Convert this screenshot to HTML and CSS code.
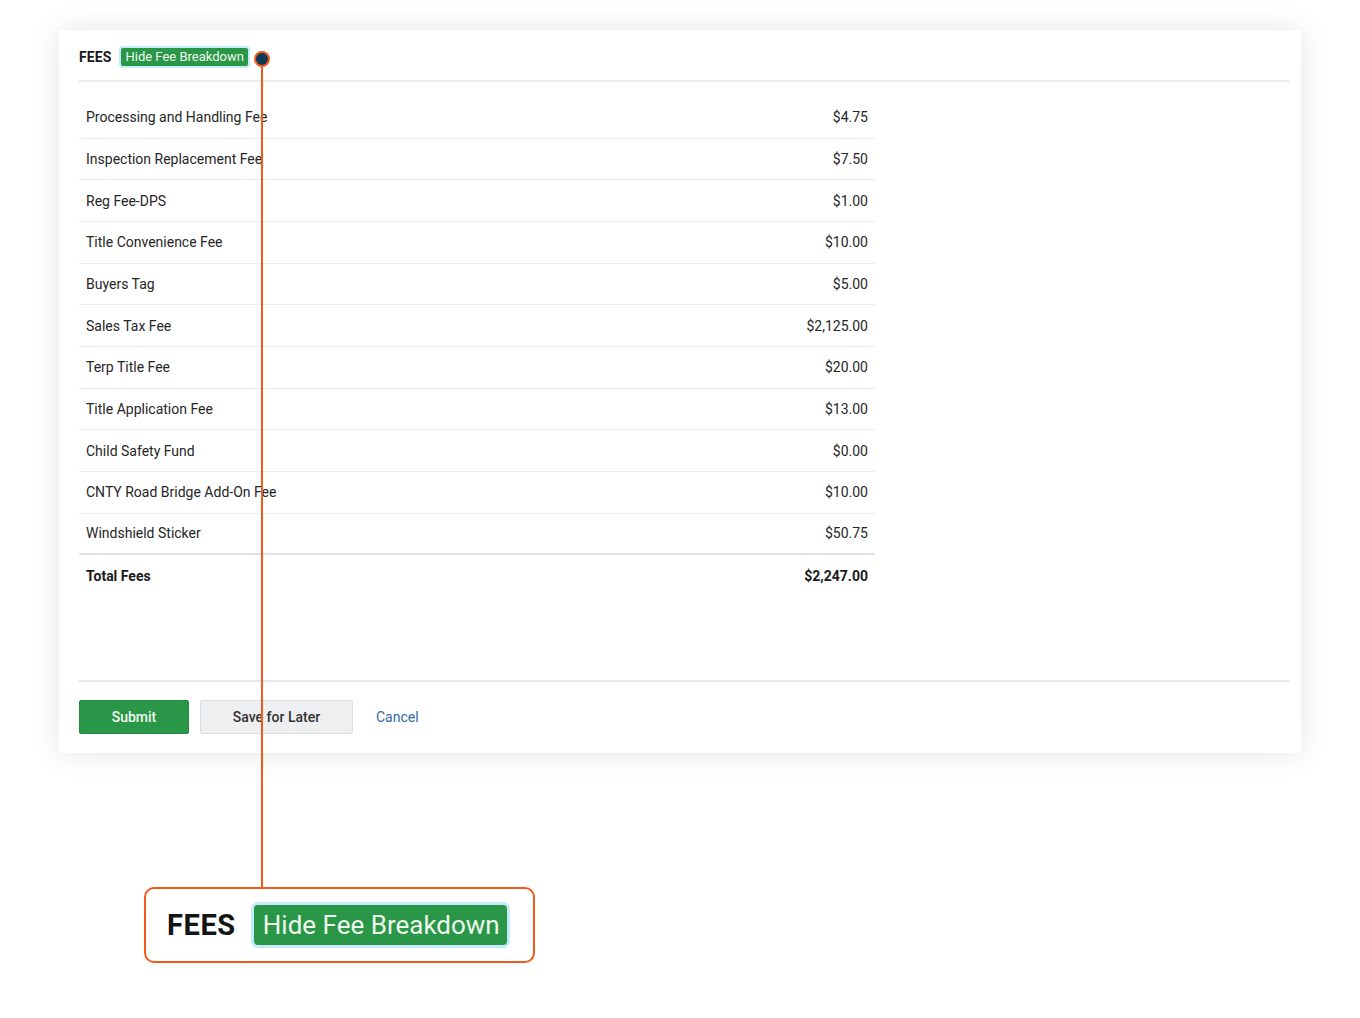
FILE: index.html
```html
<!DOCTYPE html>
<html>
<head>
<meta charset="utf-8">
<link rel="stylesheet" href="styles.css">
</head>
<body>
<div class="canvas">
  <section class="card">
    <header class="card-head">
      <span class="title">FEES</span>
      <span class="badge">Hide Fee Breakdown</span>
    </header>
    <div class="fees">
      <div class="row"><span>Processing and Handling Fee</span><span>$4.75</span></div>
      <div class="row"><span>Inspection Replacement Fee</span><span>$7.50</span></div>
      <div class="row"><span>Reg Fee-DPS</span><span>$1.00</span></div>
      <div class="row"><span>Title Convenience Fee</span><span>$10.00</span></div>
      <div class="row"><span>Buyers Tag</span><span>$5.00</span></div>
      <div class="row"><span>Sales Tax Fee</span><span>$2,125.00</span></div>
      <div class="row"><span>Terp Title Fee</span><span>$20.00</span></div>
      <div class="row"><span>Title Application Fee</span><span>$13.00</span></div>
      <div class="row"><span>Child Safety Fund</span><span>$0.00</span></div>
      <div class="row"><span>CNTY Road Bridge Add-On Fee</span><span>$10.00</span></div>
      <div class="row last"><span>Windshield Sticker</span><span>$50.75</span></div>
      <div class="row total"><span>Total Fees</span><span>$2,247.00</span></div>
    </div>
    <footer class="actions">
      <button class="btn btn-primary">Submit</button>
      <button class="btn btn-secondary">Save for Later</button>
      <a class="link" href="#">Cancel</a>
    </footer>
  </section>

  <div class="callout">
    <span class="title big">FEES</span>
    <span class="badge big">Hide Fee Breakdown</span>
  </div>

  <div class="pointer-line"></div>
  <div class="pointer-dot"></div>
</div>
</body>
</html>
```

FILE: styles.css
```css
* { box-sizing: border-box; }
html, body { margin: 0; padding: 0; background: #ffffff; }
body {
  font-family: Roboto, "Liberation Sans", Arial, sans-serif;
  color: #222;
  width: 1360px;
  height: 1018px;
  overflow: hidden;
}
.canvas {
  position: relative;
  padding: 30px 0 0 59px;
}
.card {
  width: 1242px;
  height: 723px;
  background: #fff;
  box-shadow: 0 0 28px rgba(0, 0, 0, 0.11);
  padding: 0 12px 19px 20px;
  display: flex;
  flex-direction: column;
}
.card-head {
  display: flex;
  align-items: center;
  gap: 10px;
  height: 52px;
  padding-top: 3px;
  border-bottom: 2px solid #ebebeb;
}
.title {
  font-weight: 700;
  font-size: 14px;
  color: #1a1a1a;
  letter-spacing: 0.1px;
}
.badge {
  background: #2a9647;
  color: #eef8ee;
  font-size: 13px;
  line-height: 18px;
  padding: 0 4px;
  border-radius: 2px;
  box-shadow: 0 0 0 2px #c3ebf8;
}
.fees {
  width: 796px;
  margin-top: 15px;
  font-size: 14px;
}
.row {
  display: flex;
  justify-content: space-between;
  align-items: center;
  height: 41.67px;
  padding: 0 7px;
  border-bottom: 1px solid #ececec;
  color: #262626;
}
.row.last { border-bottom: 2px solid #e2e2e8; }
.row.total { border-bottom: none; font-weight: 700; color: #1a1a1a; }
.actions {
  margin-top: auto;
  border-top: 2px solid #e6e6e8;
  padding-top: 18px;
  display: flex;
  align-items: center;
  gap: 11px;
}
.btn {
  font-family: inherit;
  font-size: 14px;
  height: 34px;
  border-radius: 2px;
  cursor: pointer;
}
.btn-primary {
  width: 110px;
  background: #2a9647;
  color: #f1faf1;
  border: 1px solid #248a40;
  font-weight: 500;
}
.btn-secondary {
  width: 153px;
  background: #eeeff1;
  color: #333;
  border: 1px solid #dcdde0;
  font-weight: 500;
}
.link {
  margin-left: 12px;
  color: #336aa8;
  text-decoration: none;
  font-size: 14px;
}
.callout {
  margin: 134px 0 0 85px;
  width: 391px;
  height: 76px;
  border: 2px solid #f25a1b;
  border-radius: 10px;
  display: flex;
  align-items: center;
  padding-left: 21px;
  gap: 18px;
}
.title.big {
  font-size: 29px;
  color: #141414;
  letter-spacing: 0.6px;
}
.badge.big {
  font-size: 26px;
  line-height: 40px;
  padding: 0 7px 0 9px;
  border-radius: 4px;
  box-shadow: 0 0 0 3px #c3ebf8;
}
.pointer-line {
  position: absolute;
  left: 261px;
  top: 60px;
  width: 2px;
  height: 828px;
  background: #f25a1b;
}
.pointer-dot {
  position: absolute;
  left: 254px;
  top: 51px;
  width: 16px;
  height: 16px;
  border-radius: 50%;
  background: #0c3c52;
  border: 2.5px solid #f25a1b;
}
```
